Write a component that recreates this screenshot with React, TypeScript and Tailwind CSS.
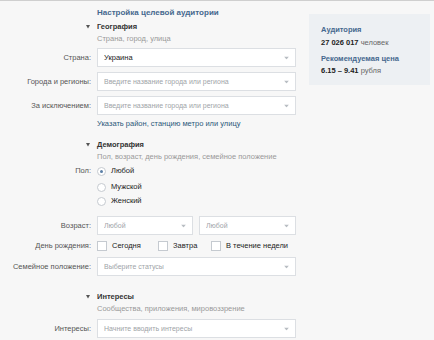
import React from 'react';

const Arrow = () => (
  <svg className="absolute right-[6px] top-1/2 -translate-y-1/2" width="5" height="3" viewBox="0 0 5 3">
    <path d="M0 0h5L2.5 3z" fill="#b8bdc2" />
  </svg>
);

function Select({ text, placeholder, className = '' }: { text: string; placeholder?: boolean; className?: string }) {
  return (
    <div
      className={`relative h-[19px] bg-white border border-[#dcdfe3] flex items-center pl-[6px] ${
        placeholder ? 'text-[#a0a4a8] text-[7px]' : 'text-[#222]'
      } ${className}`}
    >
      <span className="truncate pr-[16px]">{text}</span>
      <Arrow />
    </div>
  );
}

function Row({ label, children, className = '' }: { label: string; children: React.ReactNode; className?: string }) {
  return (
    <div className={`flex items-center ${className}`}>
      <div className="w-[91px] text-right text-[#555]">{label}</div>
      <div className="ml-[6px] w-[199px]">{children}</div>
    </div>
  );
}

function Heading({ title, sub, className = '' }: { title: string; sub: string; className?: string }) {
  return (
    <div className={className}>
      <div className="flex h-[10px] items-center">
        <div className="w-[97px] flex justify-end pr-[7px]">
          <svg width="4" height="4" viewBox="0 0 4 4">
            <path d="M0 0h4L2 3.5z" fill="#555" />
          </svg>
        </div>
        <span className="font-bold text-[#333]">{title}</span>
      </div>
      <div className="mt-[2px] h-[10px] pl-[97px] text-[#999] leading-[10px]">{sub}</div>
    </div>
  );
}

function Radio({ label, checked, className = '' }: { label: string; checked?: boolean; className?: string }) {
  return (
    <div className={`flex h-[10px] items-center ${className}`}>
      <span className="w-[9px] h-[9px] rounded-full border border-[#c5cad0] bg-white flex items-center justify-center">
        {checked && <span className="w-[3px] h-[3px] rounded-full bg-[#5b7fa6]" />}
      </span>
      <span className="ml-[5px] text-[#222]">{label}</span>
    </div>
  );
}

function Check({ label, className = '' }: { label: string; className?: string }) {
  return (
    <div className={`flex items-center ${className}`}>
      <span className="w-[10px] h-[10px] border border-[#c5cad0] bg-white" />
      <span className="ml-[5px] text-[#222]">{label}</span>
    </div>
  );
}

export default function App() {
  return (
    <div className="w-[434px] h-[340px] overflow-hidden bg-[#f7f7f7] border-t border-[#cfcfcf] font-['Liberation_Sans',Arial,sans-serif] text-[7.5px] leading-[10px]">
      <div className="flex">
        <div className="w-[296px]">
          <div className="mt-[7px] h-[10px] pl-[97px] font-bold text-[#45688e] text-[8px]">
            Настройка целевой аудитории
          </div>

          <Heading className="mt-[4px]" title="География" sub="Страна, город, улица" />

          <Row label="Страна:" className="mt-[4px]">
            <Select text="Украина" />
          </Row>
          <Row label="Города и регионы:" className="mt-[5px]">
            <Select text="Введите название города или региона" placeholder />
          </Row>
          <Row label="За исключением:" className="mt-[5px]">
            <Select text="Введите название города или региона" placeholder />
          </Row>
          <div className="mt-[4px] h-[10px] pl-[97px] text-[#2b587a]">
            Указать район, станцию метро или улицу
          </div>

          <Heading className="mt-[11px]" title="Демография" sub="Пол, возраст, день рождения, семейное положение" />

          <Row label="Пол:" className="mt-[4px] h-[10px]">
            <Radio label="Любой" checked />
          </Row>
          <div className="pl-[97px]">
            <Radio label="Мужской" className="mt-[6px]" />
            <Radio label="Женский" className="mt-[4px]" />
          </div>

          <Row label="Возраст:" className="mt-[10px]">
            <div className="flex gap-[6px]">
              <Select text="Любой" placeholder className="w-[96px]" />
              <Select text="Любой" placeholder className="w-[97px]" />
            </div>
          </Row>
          <Row label="День рождения:" className="mt-[6px] h-[10px]">
            <div className="flex">
              <Check label="Сегодня" className="w-[61px]" />
              <Check label="Завтра" className="w-[53px]" />
              <Check label="В течение недели" />
            </div>
          </Row>
          <Row label="Семейное положение:" className="mt-[6px]">
            <Select text="Выберите статусы" placeholder />
          </Row>

          <Heading className="mt-[16px]" title="Интересы" sub="Сообщества, приложения, мировоззрение" />

          <Row label="Интересы:" className="mt-[5px]">
            <Select text="Начните вводить интересы" placeholder />
          </Row>
        </div>

        <aside className="ml-[13px] mt-[13px] w-[121px] h-[71px] bg-[#edf0f3] pl-[12px] pt-[11px]">
          <div className="h-[10px] font-bold text-[#45688e]">Аудитория</div>
          <div className="mt-[3px] h-[10px]">
            <span className="font-bold text-[#222]">27 026 017</span>{' '}
            <span className="text-[#666]">человек</span>
          </div>
          <div className="mt-[6px] h-[10px] font-bold text-[#45688e]">Рекомендуемая цена</div>
          <div className="mt-[2px] h-[10px]">
            <span className="font-bold text-[#222]">6.15 – 9.41</span>{' '}
            <span className="text-[#666]">рубля</span>
          </div>
        </aside>
      </div>
    </div>
  );
}
